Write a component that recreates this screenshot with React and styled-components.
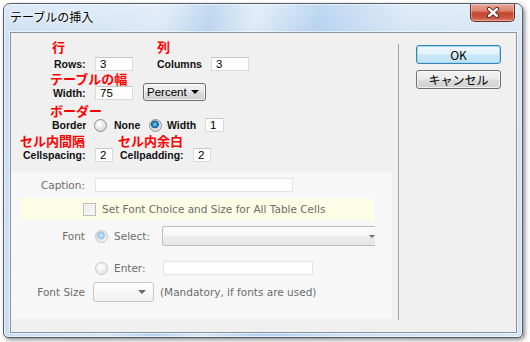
import React from 'react';
import styled, { createGlobalStyle } from 'styled-components';

const Global = createGlobalStyle`
  html, body { margin: 0; padding: 0; background: #ffffff; }
  body { width: 530px; height: 342px; overflow: hidden; }
  * { box-sizing: border-box; }
`;

const Page = styled.div`
  padding: 3px 0 0 3px;
`;

const Window = styled.div`
  width: 520px;
  height: 335px;
  border: 1px solid #4f5b68;
  border-radius: 7px 7px 5px 5px;
  background:
    linear-gradient(100deg, rgba(255,255,255,0) 0%, rgba(255,255,255,0.25) 28%, rgba(150,190,230,0.35) 36%, rgba(255,255,255,0.3) 44%, rgba(140,185,230,0.35) 55%, rgba(255,255,255,0.15) 70%, rgba(255,255,255,0.25) 100%),
    linear-gradient(to bottom, #dce9f7 0px, #cde0f4 30px, #c6dcf2 100%);
  box-shadow: 2px 2px 4px rgba(0,0,0,0.45), inset 0 0 0 1px rgba(255,255,255,0.6);
  display: flex;
  flex-direction: column;
`;

const TitleBar = styled.div`
  height: 28px;
  display: flex;
  justify-content: space-between;
  align-items: flex-start;
`;

const Title = styled.div`
  padding: 5px 0 0 6px;
  font-family: "Noto Sans CJK JP", sans-serif;
  font-size: 12px;
  line-height: 16px;
  color: #000;
  text-shadow: 0 0 6px rgba(255,255,255,0.95), 0 0 3px rgba(255,255,255,0.9);
`;

const CloseButton = styled.div`
  width: 45px;
  height: 18px;
  margin-right: 7px;
  border: 1px solid #6e2e25;
  border-top: none;
  border-radius: 0 0 5px 5px;
  background: linear-gradient(to bottom, #e9a596 0%, #dc8470 40%, #c4442f 52%, #cb5641 80%, #d97e66 100%);
  box-shadow: inset 0 0 0 1px rgba(255,255,255,0.35);
  display: flex;
  align-items: center;
  justify-content: center;
`;

const Client = styled.div`
  height: 301px;
  margin: 0 5px 0 6px;
  border: 1px solid #8a949f;
  background: #f0f0f0;
  box-shadow: 0 0 0 1px rgba(255,255,255,0.55);
  display: flex;
`;

const LeftCol = styled.div`
  width: 381px;
  display: flex;
  flex-direction: column;
`;

const Upper = styled.div`
  height: 139px;
  padding-top: 7px;
  display: flex;
  flex-direction: column;
`;

const Lower = styled.div`
  height: 147px;
  padding-top: 6px;
  background: #f7f7f7;
  display: flex;
  flex-direction: column;
`;

const Separator = styled.div`
  width: 1px;
  margin: 11px 0 12px 6px;
  background: #a3a3a3;
`;

const ButtonCol = styled.div`
  margin: 12px 0 0 17px;
  display: flex;
  flex-direction: column;
  gap: 6px;
`;

const DialogButton = styled.div`
  width: 85px;
  height: 19px;
  border-radius: 3px;
  border: 1px solid ${p => (p.$default ? '#3c7fb1' : '#707070')};
  background: ${p => p.$default
    ? 'linear-gradient(to bottom, #eef7fd 0%, #e3f2fb 48%, #cbe8f8 52%, #bfe2f6 100%)'
    : 'linear-gradient(to bottom, #f2f2f2 0%, #ebebeb 48%, #dddddd 52%, #cfcfcf 100%)'};
  box-shadow: ${p => (p.$default ? 'inset 0 0 0 1px #9fdcf8' : 'inset 0 0 0 1px rgba(255,255,255,0.7)')};
  font-family: "Noto Sans CJK JP", sans-serif;
  font-size: 12px;
  line-height: 17px;
  text-align: center;
  color: #000;
`;

const Row = styled.div`
  display: flex;
  align-items: ${p => p.$align || 'center'};
  height: ${p => p.$h}px;
  margin-top: ${p => p.$mt || 0}px;
  padding-left: ${p => p.$pl || 0}px;
`;

const RedLabel = styled.div`
  width: ${p => (p.$w ? `${p.$w}px` : 'auto')};
  font-family: "Noto Sans CJK JP", sans-serif;
  font-weight: 700;
  font-size: 13px;
  line-height: 14px;
  color: #ff0000;
  white-space: nowrap;
`;

const FieldLabel = styled.div`
  width: ${p => p.$w}px;
  margin-left: ${p => p.$ml || 0}px;
  font-family: "Liberation Sans", Arial, sans-serif;
  font-weight: 700;
  font-size: 10.5px;
  line-height: 14px;
  color: #111;
  white-space: nowrap;
`;

const TextBox = styled.div`
  width: ${p => p.$w}px;
  height: 14px;
  background: #ffffff;
  border: 1px solid #dadada;
  border-top-color: #c9c9c9;
  padding-left: 4px;
  font-family: "Liberation Sans", Arial, sans-serif;
  font-size: 11.5px;
  line-height: 12px;
  color: #000;
`;

const Dropdown = styled.div`
  width: 63px;
  height: 18px;
  margin: -3px 0 0 10px;
  border: 1px solid #707070;
  border-radius: 3px;
  background: linear-gradient(to bottom, #f2f2f2 0%, #ebebeb 48%, #dddddd 52%, #cfcfcf 100%);
  box-shadow: inset 0 0 0 1px rgba(255,255,255,0.7);
  display: flex;
  align-items: center;
  justify-content: space-between;
  padding: 0 6px 0 3px;
  font-family: "Liberation Sans", Arial, sans-serif;
  font-size: 11.5px;
  color: #000;
`;

const Arrow = styled.span`
  width: 0;
  height: 0;
  border-left: ${p => p.$s || 4}px solid transparent;
  border-right: ${p => p.$s || 4}px solid transparent;
  border-top: ${p => p.$s || 4}px solid ${p => p.$c || '#000'};
`;

const Radio = styled.span`
  width: 13px;
  height: 13px;
  flex: none;
  margin-left: ${p => p.$ml || 0}px;
  border-radius: 50%;
  border: 1px solid ${p => (p.$dim ? '#c6c6c6' : '#8e8f8f')};
  background: ${p => {
    if (p.$checked && p.$dim) return 'radial-gradient(circle at 45% 40%, #d6ecfa 0px, #9ccbec 3px, #8cbfe4 3.5px, #e9e9e9 4.2px, #f7f7f7 100%)';
    if (p.$checked) return 'radial-gradient(circle at 45% 40%, #8fd3ff 0px, #1f7fc4 2.6px, #0c4f8e 3.6px, #d8d8d8 4.2px, #f4f4f4 100%)';
    return p.$dim
      ? 'radial-gradient(circle at 40% 35%, #ffffff 0px, #f3f3f3 4px, #dcdcdc 100%)'
      : 'radial-gradient(circle at 40% 35%, #ffffff 0px, #ececec 4px, #c9c9c9 100%)';
  }};
`;

const OptText = styled.div`
  width: ${p => p.$w}px;
  margin-left: ${p => p.$ml || 0}px;
  font-family: "Liberation Sans", Arial, sans-serif;
  font-weight: 700;
  font-size: 10.5px;
  color: #111;
`;

const DimLabel = styled.div`
  width: ${p => (p.$w ? `${p.$w}px` : 'auto')};
  margin-left: ${p => p.$ml || 0}px;
  text-align: ${p => p.$right ? 'right' : 'left'};
  font-family: "DejaVu Sans", Verdana, sans-serif;
  font-size: 10.5px;
  color: #6c6c6c;
  white-space: nowrap;
`;

const DimInput = styled.div`
  width: ${p => p.$w}px;
  height: 14px;
  margin-left: ${p => p.$ml || 0}px;
  background: #ffffff;
  border: 1px solid #e4e4e4;
`;

const YellowBand = styled.div`
  width: 353px;
  height: 22px;
  margin: 6px 0 0 10px;
  padding-left: 62px;
  background: #fdfde6;
  display: flex;
  align-items: center;
`;

const CheckBox = styled.span`
  width: 13px;
  height: 13px;
  border: 1px solid #bdbdbd;
  background: linear-gradient(135deg, #e8e8e8, #fbfbfb);
  box-shadow: inset 0 0 0 1px #f4f4f4;
`;

const ComboBox = styled.div`
  width: ${p => p.$w}px;
  height: 20px;
  margin-left: ${p => p.$ml || 0}px;
  border: 1px solid ${p => (p.$open ? '#bdbdbd' : '#c9c9c9')};
  border-right: ${p => (p.$open ? 'none' : undefined)};
  border-radius: ${p => (p.$open ? '3px 0 0 3px' : '3px')};
  background: ${p => p.$open
    ? 'linear-gradient(to bottom, #fbfbfb 0%, #f7f7f7 45%, #ececec 52%, #e6e6e6 100%)'
    : 'linear-gradient(to bottom, #ffffff 0%, #f8f8f8 50%, #f0f0f0 100%)'};
  display: flex;
  align-items: center;
  justify-content: flex-end;
  padding-right: ${p => (p.$open ? 0 : 7)}px;
`;

function CloseGlyph() {
  return (
    <svg width="14" height="11" viewBox="0 0 14 11">
      <path d="M3 2 L11 9 M11 2 L3 9" stroke="#4a1d16" strokeWidth="4.2" strokeLinecap="round" fill="none" />
      <path d="M3 2 L11 9 M11 2 L3 9" stroke="#ffffff" strokeWidth="2.4" strokeLinecap="round" fill="none" />
    </svg>
  );
}

export default function App() {
  return (
    <>
      <Global />
      <Page>
        <Window>
          <TitleBar>
            <Title>テーブルの挿入</Title>
            <CloseButton><CloseGlyph /></CloseButton>
          </TitleBar>
          <Client>
            <LeftCol>
              <Upper>
                <Row $h={14} $pl={41}>
                  <RedLabel $w={105}>行</RedLabel>
                  <RedLabel>列</RedLabel>
                </Row>
                <Row $h={14} $mt={3} $pl={43}>
                  <FieldLabel $w={41}>Rows:</FieldLabel>
                  <TextBox $w={38}>3</TextBox>
                  <FieldLabel $w={54} $ml={24}>Columns</FieldLabel>
                  <TextBox $w={38}>3</TextBox>
                </Row>
                <Row $h={15} $pl={39} $align="flex-end">
                  <RedLabel>テーブルの幅</RedLabel>
                </Row>
                <Row $h={16} $pl={42} $align="flex-start">
                  <FieldLabel $w={42}>Width:</FieldLabel>
                  <TextBox $w={38}>75</TextBox>
                  <Dropdown>Percent<Arrow $s={4} /></Dropdown>
                </Row>
                <Row $h={14} $mt={2} $pl={39}>
                  <RedLabel>ボーダー</RedLabel>
                </Row>
                <Row $h={14} $pl={41}>
                  <FieldLabel $w={42}>Border</FieldLabel>
                  <Radio />
                  <OptText $w={35} $ml={7}>None</OptText>
                  <Radio $checked />
                  <OptText $w={38} $ml={5}>Width</OptText>
                  <TextBox $w={19}>1</TextBox>
                </Row>
                <Row $h={15} $mt={1} $pl={9} $align="flex-end">
                  <RedLabel $w={98}>セル内間隔</RedLabel>
                  <RedLabel>セル内余白</RedLabel>
                </Row>
                <Row $h={14} $pl={12}>
                  <FieldLabel $w={72}>Cellspacing:</FieldLabel>
                  <TextBox $w={18}>2</TextBox>
                  <FieldLabel $w={73} $ml={7}>Cellpadding:</FieldLabel>
                  <TextBox $w={18}>2</TextBox>
                </Row>
              </Upper>
              <Lower>
                <Row $h={14}>
                  <DimLabel $w={74} $right>Caption:</DimLabel>
                  <DimInput $w={198} $ml={10} />
                </Row>
                <YellowBand>
                  <CheckBox />
                  <DimLabel $ml={6}>Set Font Choice and Size for All Table Cells</DimLabel>
                </YellowBand>
                <Row $h={20} $mt={6}>
                  <DimLabel $w={74} $right>Font</DimLabel>
                  <Radio $ml={10} $checked $dim />
                  <DimLabel $w={48} $ml={6}>Select:</DimLabel>
                  <ComboBox $w={213} $open><Arrow $s={3.5} $c="#6a6a6a" /></ComboBox>
                </Row>
                <Row $h={14} $mt={15}>
                  <DimLabel $w={74} />
                  <Radio $ml={10} $dim />
                  <DimLabel $w={49} $ml={6}>Enter:</DimLabel>
                  <DimInput $w={150} />
                </Row>
                <Row $h={20} $mt={7}>
                  <DimLabel $w={74} $right>Font Size</DimLabel>
                  <ComboBox $w={61} $ml={8}><Arrow $s={4} $c="#6a6a6a" /></ComboBox>
                  <DimLabel $ml={6}>(Mandatory, if fonts are used)</DimLabel>
                </Row>
              </Lower>
            </LeftCol>
            <Separator />
            <ButtonCol>
              <DialogButton $default>OK</DialogButton>
              <DialogButton>キャンセル</DialogButton>
            </ButtonCol>
          </Client>
        </Window>
      </Page>
    </>
  );
}
